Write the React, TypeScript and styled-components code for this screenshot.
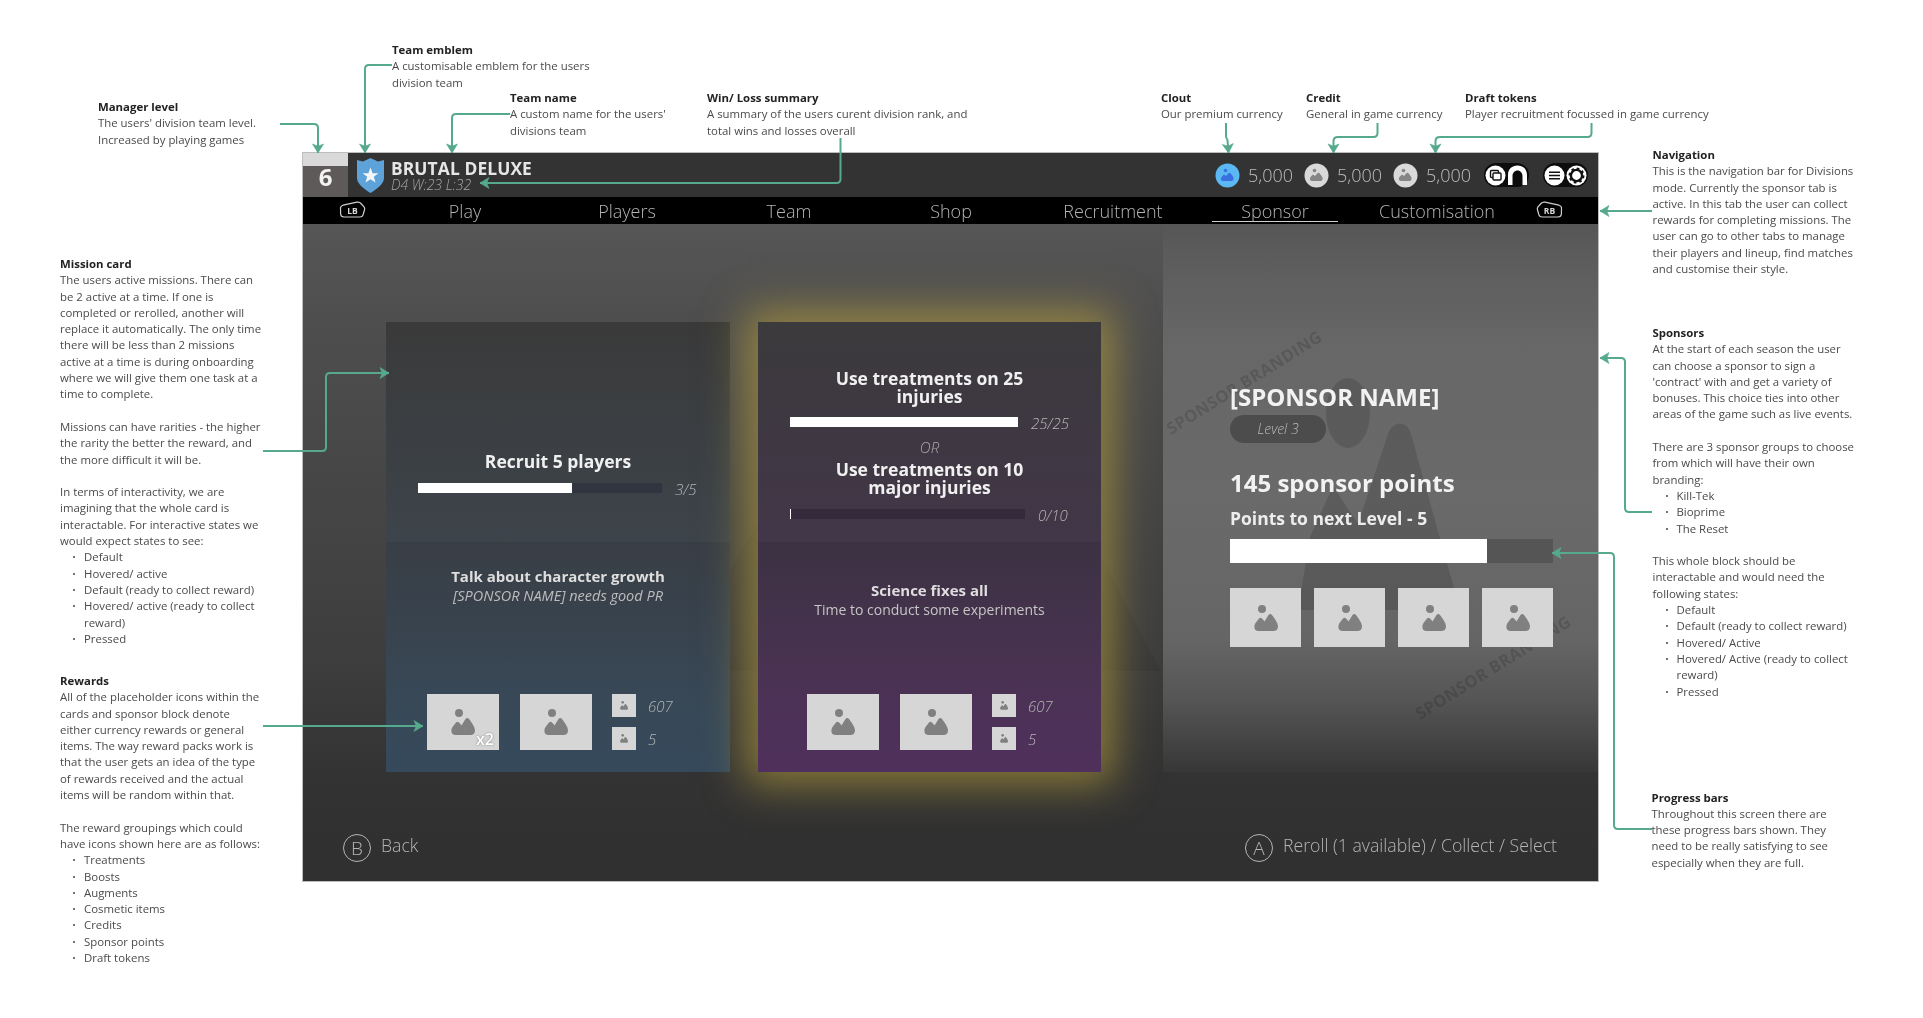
import React from "react";
import styled, { createGlobalStyle, css } from "styled-components";

const Global = createGlobalStyle`
  html, body { margin: 0; padding: 0; background: #fff; }
  body { font-family: "Open Sans", "Noto Sans", sans-serif; overflow: hidden; }
  * { box-sizing: border-box; }
`;

const Board = styled.div`
  position: relative;
  width: 1923px;
  height: 1018px;
  padding: 153px 0 0 303px;
  background: #fff;
  filter: blur(0.35px);
`;

const Note = styled.div<{ $x: number; $y: number }>`
  position: absolute;
  left: ${(p) => p.$x}px;
  top: ${(p) => p.$y}px;
  font-size: 11.4px;
  line-height: 16.3px;
  color: #4a4a4a;
  white-space: nowrap;
`;
const NoteTitle = styled.div`
  font-weight: 700;
  color: #222;
`;
const NoteLine = styled.div`
  min-height: 16.3px;
`;
const NoteBullet = styled.div<{ $bare?: boolean }>`
  position: relative;
  padding-left: 24px;
  ${(p) =>
    !p.$bare &&
    css`
      &::before {
        content: "";
        position: absolute;
        left: 13px;
        top: 7px;
        width: 2px;
        height: 2px;
        border-radius: 50%;
        background: #444;
      }
    `}
`;

const Connectors = styled.svg`
  position: absolute;
  left: 0;
  top: 0;
  z-index: 5;
  pointer-events: none;
`;

const Frame = styled.div`
  width: 1295px;
  height: 728px;
  display: flex;
  flex-direction: column;
  outline: 1px solid #bdbdbd;
  background: #333;
  overflow: hidden;
`;

const Header = styled.header`
  height: 44px;
  display: flex;
  align-items: center;
  background: #333;
  padding-right: 10px;
`;
const LevelBox = styled.div`
  width: 45px;
  height: 44px;
  display: flex;
  flex-direction: column;
`;
const LevelBand = styled.div`
  height: 13px;
  background: #d9d9d9;
`;
const LevelNumber = styled.div`
  flex: 1;
  background: #5f5a5a;
  color: #f2f2f2;
  font-weight: 700;
  font-size: 24px;
  line-height: 21px;
  text-align: center;
`;
const Shield = styled.svg`
  margin-left: 9px;
`;
const TeamText = styled.div`
  margin-left: 7px;
  display: flex;
  flex-direction: column;
`;
const TeamName = styled.div`
  font-size: 17.4px;
  line-height: 19px;
  font-weight: 700;
  color: #e6e6e6;
  letter-spacing: 0.1px;
`;
const TeamRecord = styled.div`
  font-size: 14px;
  line-height: 14px;
  font-style: italic;
  font-weight: 300;
  color: #a6a6a6;
`;
const Wallet = styled.div`
  margin-left: auto;
  display: flex;
  align-items: center;
`;
const Amount = styled.span`
  margin: 0 13px 0 8px;
  width: 43px;
  font-size: 18px;
  font-weight: 300;
  color: #bdbdbd;
  white-space: nowrap;
`;
const Pill = styled.div<{ $gap: number }>`
  height: 24px;
  width: 45px;
  margin-left: ${(p) => p.$gap}px;
  background: #0c0c0c;
  border-radius: 12px;
  display: flex;
  align-items: center;
  justify-content: space-between;
  padding: 0 1px;
`;

const Nav = styled.nav`
  height: 27px;
  background: #000;
  display: grid;
  grid-template-columns: 81px repeat(7, 162px) 80px;
  align-items: stretch;
`;
const Tab = styled.div<{ $active?: boolean }>`
  position: relative;
  display: flex;
  align-items: center;
  justify-content: center;
  font-size: 18px;
  font-weight: 300;
  color: #b4b4b4;
  ${(p) =>
    p.$active &&
    css`
      &::after {
        content: "";
        position: absolute;
        left: 18px;
        right: 18px;
        bottom: 2px;
        height: 1px;
        background: #cfcfcf;
      }
    `}
`;
const Bumper = styled.div<{ $side: "l" | "r" }>`
  display: flex;
  align-items: center;
  justify-content: center;
  padding-bottom: 3px;
  ${(p) => (p.$side === "l" ? "padding-left: 18px;" : "padding-right: 18px;")}
`;

const Main = styled.main`
  position: relative;
  flex: 1;
  display: flex;
  flex-direction: column;
  background: linear-gradient(#565656 0%, #4e4e4e 15%, #3e3e3e 65%, #333 84%, #2f2f2f 100%);
`;
const Ghost = styled.svg`
  position: absolute;
  left: 0;
  top: 0;
`;
const Content = styled.div`
  position: relative;
  height: 548px;
  display: flex;
  padding-left: 83px;
`;
const Card = styled.article<{ $tone: "blue" | "purple" }>`
  width: ${(p) => (p.$tone === "blue" ? 344 : 343)}px;
  height: 450px;
  margin-top: 98px;
  margin-right: 28px;
  display: flex;
  flex-direction: column;
  background: ${(p) =>
    p.$tone === "blue"
      ? "linear-gradient(#3a3a3a 0%, #3d444b 49%, #364a5c 100%)"
      : "linear-gradient(#3b3a3c 0%, #423648 49%, #50305c 100%)"};
  ${(p) => p.$tone === "purple" && "box-shadow: 0 0 38px 12px rgba(190, 165, 60, 0.62);"}
`;
const Upper = styled.div<{ $top: number }>`
  height: 220px;
  padding-top: ${(p) => p.$top}px;
`;
const Lower = styled.div<{ $top: number; $left: number }>`
  height: 230px;
  padding-top: ${(p) => p.$top}px;
  display: flex;
  flex-direction: column;
  background: linear-gradient(rgba(20, 15, 25, 0.11), rgba(20, 15, 25, 0) 70%);
  --reward-left: ${(p) => p.$left}px;
`;
const Objective = styled.h3`
  margin: 0;
  font-size: 17.5px;
  line-height: 17.5px;
  font-weight: 700;
  color: #f0f0f0;
  text-align: center;
`;
const Or = styled.div`
  margin: 11px 0 5px;
  font-size: 15px;
  line-height: 18px;
  font-style: italic;
  font-weight: 300;
  color: #a8a8a8;
  text-align: center;
`;
const BarRow = styled.div<{ $mt: number }>`
  margin-top: ${(p) => p.$mt}px;
  height: 10px;
  padding-left: 32px;
  display: flex;
  align-items: center;
`;
const Track = styled.div<{ $w: number; $bg: string }>`
  width: ${(p) => p.$w}px;
  height: 10px;
  background: ${(p) => p.$bg};
`;
const Fill = styled.div`
  height: 100%;
  background: #fff;
`;
const BarLabel = styled.span`
  position: relative;
  top: 1px;
  margin-left: 13px;
  font-size: 15px;
  font-style: italic;
  font-weight: 300;
  color: #b5b5b5;
`;
const Headline = styled.div`
  font-size: 15px;
  line-height: 20px;
  font-weight: 700;
  color: #dedede;
  text-align: center;
`;
const Subline = styled.div<{ $italic?: boolean }>`
  font-size: ${(p) => (p.$italic ? 14.5 : 14)}px;
  line-height: 20px;
  font-weight: 400;
  font-style: ${(p) => (p.$italic ? "italic" : "normal")};
  color: ${(p) => (p.$italic ? "#bdbdbd" : "#c6c6c6")};
  text-align: center;
`;
const Rewards = styled.div`
  margin-top: auto;
  padding: 0 0 22px var(--reward-left);
  display: flex;
  align-items: flex-end;
  gap: 20.5px;
`;
const RewardBox = styled.div<{ $w?: number; $h?: number }>`
  position: relative;
  width: ${(p) => p.$w ?? 72}px;
  height: ${(p) => p.$h ?? 56}px;
  background: #d6d6d6;
  display: flex;
  align-items: center;
  justify-content: center;
`;
const Multiplier = styled.span`
  position: absolute;
  right: 5px;
  bottom: 3px;
  font-size: 16px;
  line-height: 16px;
  font-weight: 600;
  color: #fff;
  text-shadow: 0 0 2px #777;
`;
const SmallStack = styled.div`
  display: flex;
  flex-direction: column;
  gap: 10px;
`;
const SmallRow = styled.div`
  display: flex;
  align-items: center;
  gap: 12px;
  height: 23px;
`;
const SmallBox = styled.div`
  width: 24px;
  height: 23px;
  background: #d6d6d6;
  display: flex;
  align-items: center;
  justify-content: center;
`;
const SmallValue = styled.span`
  font-size: 15px;
  font-style: italic;
  font-weight: 300;
  color: #b5b5b5;
`;

const SponsorPanel = styled.section`
  position: relative;
  flex: 1;
  margin-left: 34px;
  padding: 158px 0 0 67px;
  overflow: hidden;
  background: linear-gradient(#565656 0%, #5c5c5c 6%, #676767 22%, #6a6a6a 50%, #656565 76%, #555 87%, #404040 96%, #373737 100%);
`;
const Watermark = styled.span<{ $x: number; $y: number }>`
  position: absolute;
  left: ${(p) => p.$x}px;
  top: ${(p) => p.$y}px;
  font-size: 16.5px;
  line-height: 20px;
  font-weight: 700;
  letter-spacing: 0.4px;
  white-space: nowrap;
  color: rgba(0, 0, 0, 0.14);
  transform: rotate(-32deg);
  transform-origin: 0 50%;
`;
const PanelBody = styled.div`
  position: relative;
`;
const SponsorName = styled.h2`
  margin: 0;
  font-size: 24px;
  line-height: 30px;
  font-weight: 700;
  color: #f2f2f2;
`;
const LevelPill = styled.div`
  margin-top: 3px;
  width: 96px;
  height: 28px;
  border-radius: 14px;
  background: #4c4c4c;
  color: #b9b9b9;
  font-size: 14px;
  font-style: italic;
  font-weight: 300;
  line-height: 28px;
  text-align: center;
`;
const SponsorPoints = styled.div`
  margin-top: 24px;
  font-size: 24px;
  line-height: 32px;
  font-weight: 700;
  color: #f2f2f2;
`;
const NextLevel = styled.div`
  margin-top: 7px;
  font-size: 17.5px;
  line-height: 24px;
  font-weight: 700;
  color: #ededed;
`;
const SponsorTrack = styled.div`
  margin-top: 9px;
  width: 323px;
  height: 24px;
  background: #555;
`;
const SponsorBoxes = styled.div`
  margin-top: 25px;
  width: 323px;
  display: flex;
  justify-content: space-between;
`;

const Footer = styled.footer`
  flex: 1;
  display: flex;
  justify-content: space-between;
  align-items: flex-start;
  padding: 62px 41px 0 40px;
`;
const Hint = styled.div`
  display: flex;
  align-items: center;
  gap: 10px;
  font-size: 17.7px;
  font-weight: 300;
  color: #b5b5b5;
  white-space: nowrap;
`;
const HintText = styled.span`
  position: relative;
  top: -3px;
`;
const PadButton = styled.span`
  width: 28px;
  height: 28px;
  border-radius: 50%;
  border: 1.5px solid #b5b5b5;
  display: flex;
  align-items: center;
  justify-content: center;
  font-size: 19px;
  font-weight: 300;
  color: #b5b5b5;
`;

const Placeholder = ({ w = 24, color = "#808080" }: { w?: number; color?: string }) => (
  <svg width={w} height={(w * 26) / 24} viewBox="0 0 24 26" aria-hidden>
    <circle cx="8" cy="4" r="4" fill={color} />
    <path
      d="M4 26C0 26-.5 21 1.5 18L5 13.5C6.5 11.8 8 12.8 9.5 15L10.5 16.5 14.5 10C15.5 8.6 17 8.6 18 10 21 14 24 18 24 21.5 24 24.5 22 26 19.5 26Z"
      fill={color}
    />
  </svg>
);

const Coin = ({ bg, fg }: { bg: string; fg: string }) => (
  <svg width="25" height="25" viewBox="0 0 25 25" aria-hidden>
    <circle cx="12.5" cy="12.5" r="12" fill={bg} />
    <circle cx="10.5" cy="7.5" r="1.8" fill={fg} />
    <path d="M8 18C5.5 18 5.5 15 7 13.5L9 11.5 11 13 13.5 10.2C14.5 9.5 15.5 10 16 11 18 13 19 15 18.5 16.5 18 18 17 18 16 18Z" fill={fg} />
  </svg>
);

const Round = ({ children }: { children?: React.ReactNode }) => (
  <svg width="21" height="21" viewBox="0 0 21 21" aria-hidden>
    <circle cx="10.5" cy="10.5" r="10" fill="#fff" />
    {children}
  </svg>
);

const Bumpers = ({ label, flip }: { label: string; flip?: boolean }) => (
  <svg width="27" height="17" viewBox="0 0 27 17" aria-label={label}>
    <path
      d="M1.5 6.5C2 5 3 4.5 4 4.2L18 1.2C20 .9 21 1.3 22 2.5L25.2 6.2C25.8 7 25.8 8 25.5 9L24 14C23.5 15.5 22.5 16 21 16H5C3 16 1.8 15 1.6 13Z"
      fill="none"
      stroke="#cfcfcf"
      strokeWidth="1.2"
      transform={flip ? "translate(27 0) scale(-1 1)" : undefined}
    />
    <text x="13.5" y="13" textAnchor="middle" fontSize="8.5" fontWeight="700" fill="#d8d8d8" fontFamily="Open Sans, sans-serif">
      {label}
    </text>
  </svg>
);

const notes: { x: number; y: number; title: string; lines: string[] }[] = [
  { x: 392, y: 42, title: "Team emblem", lines: ["A customisable emblem for the users", "division team"] },
  { x: 510, y: 90, title: "Team name", lines: ["A custom name for the users'", "divisions team"] },
  { x: 707, y: 90, title: "Win/ Loss summary", lines: ["A summary of the users curent division rank, and", "total wins and losses overall"] },
  { x: 98, y: 99, title: "Manager level", lines: ["The users' division team level.", "Increased by playing games"] },
  { x: 1161, y: 90, title: "Clout", lines: ["Our premium currency"] },
  { x: 1306, y: 90, title: "Credit", lines: ["General in game currency"] },
  { x: 1465, y: 90, title: "Draft tokens", lines: ["Player recruitment focussed in game currency"] },
  {
    x: 1652.5,
    y: 147,
    title: "Navigation",
    lines: [
      "This is the navigation bar for Divisions",
      "mode. Currently the sponsor tab is",
      "active. In this tab the user can collect",
      "rewards for completing missions. The",
      "user can go to other tabs to manage",
      "their players and lineup, find matches",
      "and customise their style.",
    ],
  },
  {
    x: 1652.5,
    y: 325,
    title: "Sponsors",
    lines: [
      "At the start of each season the user",
      "can choose a sponsor to sign a",
      "'contract' with and get a variety of",
      "bonuses. This choice ties into other",
      "areas of the game such as live events.",
      "",
      "There are 3 sponsor groups to choose",
      "from which will have their own",
      "branding:",
      "* Kill-Tek",
      "* Bioprime",
      "* The Reset",
      "",
      "This whole block should be",
      "interactable and would need the",
      "following states:",
      "* Default",
      "* Default (ready to collect reward)",
      "* Hovered/ Active",
      "* Hovered/ Active (ready to collect",
      "> reward)",
      "* Pressed",
    ],
  },
  {
    x: 1651.5,
    y: 789.5,
    title: "Progress bars",
    lines: [
      "Throughout this screen there are",
      "these progress bars shown. They",
      "need to be really satisfying to see",
      "especially when they are full.",
    ],
  },
  {
    x: 60,
    y: 256,
    title: "Mission card",
    lines: [
      "The users active missions. There can",
      "be 2 active at a time. If one is",
      "completed or rerolled, another will",
      "replace it automatically. The only time",
      "there will be less than 2 missions",
      "active at a time is during onboarding",
      "where we will give them one task at a",
      "time to complete.",
      "",
      "Missions can have rarities - the higher",
      "the rarity the better the reward, and",
      "the more difficult it will be.",
      "",
      "In terms of interactivity, we are",
      "imagining that the whole card is",
      "interactable. For interactive states we",
      "would expect states to see:",
      "* Default",
      "* Hovered/ active",
      "* Default (ready to collect reward)",
      "* Hovered/ active (ready to collect",
      "> reward)",
      "* Pressed",
    ],
  },
  {
    x: 60,
    y: 673,
    title: "Rewards",
    lines: [
      "All of the placeholder icons within the",
      "cards and sponsor block denote",
      "either currency rewards or general",
      "items. The way reward packs work is",
      "that the user gets an idea of the type",
      "of rewards received and the actual",
      "items will be random within that.",
      "",
      "The reward groupings which could",
      "have icons shown here are as follows:",
      "* Treatments",
      "* Boosts",
      "* Augments",
      "* Cosmetic items",
      "* Credits",
      "* Sponsor points",
      "* Draft tokens",
    ],
  },
];

const arrows: string[] = [
  "M280 124H314Q318 124 318 128V153",
  "M392 65H369Q365 65 365 69V153",
  "M510 114H456Q452 114 452 118V153",
  "M840.5 138V179Q840.5 183 836.5 183H480",
  "M1226 123V136Q1226 138 1227.5 140L1228.5 153",
  "M1377.5 123V133Q1377.5 137 1373.5 137H1338Q1333.5 137 1333.5 141V153",
  "M1591.5 123V133Q1591.5 137 1587.5 137H1440Q1435.5 137 1435.5 141V153",
  "M1652 211H1600",
  "M1652 512H1629Q1625 512 1625 508V362Q1625 358 1621 358H1600",
  "M1652 829H1618Q1614 829 1614 825V557Q1614 553 1610 553H1552",
  "M263 451H322Q326 451 326 447V377Q326 373 330 373H389",
  "M263 726H423",
];

const tabs = ["Play", "Players", "Team", "Shop", "Recruitment", "Sponsor", "Customisation"];

const SmallRewards = () => (
  <SmallStack>
    <SmallRow>
      <SmallBox><Placeholder w={8} /></SmallBox>
      <SmallValue>607</SmallValue>
    </SmallRow>
    <SmallRow>
      <SmallBox><Placeholder w={8} /></SmallBox>
      <SmallValue>5</SmallValue>
    </SmallRow>
  </SmallStack>
);

export default function App() {
  return (
    <Board>
      <Global />
      {notes.map((n) => (
        <Note key={n.title} $x={n.x} $y={n.y}>
          <NoteTitle>{n.title}</NoteTitle>
          {n.lines.map((l, i) =>
            l.startsWith("* ") ? (
              <NoteBullet key={i}>{l.slice(2)}</NoteBullet>
            ) : l.startsWith("> ") ? (
              <NoteBullet key={i} $bare>{l.slice(2)}</NoteBullet>
            ) : (
              <NoteLine key={i}>{l}</NoteLine>
            )
          )}
        </Note>
      ))}

      <Frame>
        <Header>
          <LevelBox>
            <LevelBand />
            <LevelNumber>6</LevelNumber>
          </LevelBox>
          <Shield width="27" height="35" viewBox="0 0 27 35" aria-hidden>
            <path d="M0 2 6 3.5 13.5 0 21 3.5 27 2V20C27 26 20 31 13.5 35 7 31 0 26 0 20Z" fill="#5da3d9" />
            <path d="M13.5 9.5 15.6 15.2H21.4L16.8 18.8 18.5 24.6 13.5 21.2 8.5 24.6 10.2 18.8 5.6 15.2H11.4Z" fill="#f4f6f8" />
          </Shield>
          <TeamText>
            <TeamName>BRUTAL DELUXE</TeamName>
            <TeamRecord>D4 W:23 L:32</TeamRecord>
          </TeamText>
          <Wallet>
            <Coin bg="#5bb8f2" fg="#3a6fe0" />
            <Amount>5,000</Amount>
            <Coin bg="#d9d9d9" fg="#858585" />
            <Amount>5,000</Amount>
            <Coin bg="#d9d9d9" fg="#858585" />
            <Amount>5,000</Amount>
            <Pill $gap={2}>
              <Round>
                <rect x="5.5" y="5.5" width="8" height="7" rx="1" fill="none" stroke="#111" strokeWidth="1.4" />
                <rect x="8" y="8" width="8" height="7" rx="1" fill="#fff" stroke="#111" strokeWidth="1.4" />
              </Round>
              <svg width="21" height="21" viewBox="0 0 21 21" aria-hidden>
                <path d="M1 20V10C1 4 5 .5 10.5.5S20 4 20 10V20H15.5V11C15.5 8 13.5 5.5 10.5 5.5S5.5 8 5.5 11V20Z" fill="#fff" />
              </svg>
            </Pill>
            <Pill $gap={14}>
              <Round>
                <path d="M5 7.2H16M5 10.5H16M5 13.8H16" stroke="#111" strokeWidth="1.6" />
              </Round>
              <Round>
                <circle cx="10.5" cy="10.5" r="5.6" fill="none" stroke="#111" strokeWidth="2.4" />
                <circle cx="10.5" cy="10.5" r="7" fill="none" stroke="#111" strokeWidth="2" strokeDasharray="2.6 2.9" />
              </Round>
            </Pill>
          </Wallet>
        </Header>

        <Nav>
          <Bumper $side="l"><Bumpers label="LB" /></Bumper>
          {tabs.map((t) => (
            <Tab key={t} $active={t === "Sponsor"}>{t}</Tab>
          ))}
          <Bumper $side="r"><Bumpers label="RB" flip /></Bumper>
        </Nav>

        <Main>
          <Ghost width="1295" height="657" viewBox="0 0 1295 657" aria-hidden>
            <path d="M368 447 569 105H678L858 447Z" fill="#000" fillOpacity="0.05" />
          </Ghost>
          <Content>
            <Card $tone="blue">
              <Upper $top={131}>
                <Objective>Recruit 5 players</Objective>
                <BarRow $mt={12}>
                  <Track $w={244} $bg="#2f3640">
                    <Fill style={{ width: "63%" }} />
                  </Track>
                  <BarLabel>3/5</BarLabel>
                </BarRow>
              </Upper>
              <Lower $top={24} $left={41}>
                <Headline>Talk about character growth</Headline>
                <Subline $italic>[SPONSOR NAME] needs good PR</Subline>
                <Rewards>
                  <RewardBox>
                    <Placeholder />
                    <Multiplier>x2</Multiplier>
                  </RewardBox>
                  <RewardBox><Placeholder /></RewardBox>
                  <SmallRewards />
                </Rewards>
              </Lower>
            </Card>

            <Card $tone="purple">
              <Upper $top={48}>
                <Objective>Use treatments on 25<br />injuries</Objective>
                <BarRow $mt={12}>
                  <Track $w={228} $bg="#352a3c">
                    <Fill style={{ width: "100%" }} />
                  </Track>
                  <BarLabel>25/25</BarLabel>
                </BarRow>
                <Or>OR</Or>
                <Objective>Use treatments on 10<br />major injuries</Objective>
                <BarRow $mt={13}>
                  <Track $w={235} $bg="#352a3c">
                    <Fill style={{ width: "1px" }} />
                  </Track>
                  <BarLabel>0/10</BarLabel>
                </BarRow>
              </Upper>
              <Lower $top={38} $left={49}>
                <Headline>Science fixes all</Headline>
                <Subline>Time to conduct some experiments</Subline>
                <Rewards>
                  <RewardBox><Placeholder /></RewardBox>
                  <RewardBox><Placeholder /></RewardBox>
                  <SmallRewards />
                </Rewards>
              </Lower>
            </Card>

            <SponsorPanel>
              <Ghost width="435" height="548" viewBox="0 0 435 548" aria-hidden>
                <ellipse cx="185" cy="189" rx="22" ry="35" fill="#000" fillOpacity="0.13" />
                <path d="M135 386 147 313 170 262 195 300 225 210C230 196 244 196 248 210L297 386Z" fill="#000" fillOpacity="0.13" />
              </Ghost>
              <Watermark $x={5} $y={196}>SPONSOR BRANDING</Watermark>
              <Watermark $x={254} $y={481}>SPONSOR BRANDING</Watermark>
              <PanelBody>
                <SponsorName>[SPONSOR NAME]</SponsorName>
                <LevelPill>Level 3</LevelPill>
                <SponsorPoints>145 sponsor points</SponsorPoints>
                <NextLevel>Points to next Level - 5</NextLevel>
                <SponsorTrack>
                  <Fill style={{ width: "79.5%" }} />
                </SponsorTrack>
                <SponsorBoxes>
                  {[0, 1, 2, 3].map((i) => (
                    <RewardBox key={i} $w={71} $h={59}><Placeholder /></RewardBox>
                  ))}
                </SponsorBoxes>
              </PanelBody>
            </SponsorPanel>
          </Content>

          <Footer>
            <Hint>
              <PadButton>B</PadButton>
              <HintText>Back</HintText>
            </Hint>
            <Hint>
              <PadButton>A</PadButton>
              <HintText>Reroll (1 available) / Collect / Select</HintText>
            </Hint>
          </Footer>
        </Main>
      </Frame>

      <Connectors width="1923" height="1018" viewBox="0 0 1923 1018" aria-hidden>
        <defs>
          <marker id="tip" markerUnits="userSpaceOnUse" markerWidth="12" markerHeight="14" viewBox="-1 -7 12 14" refX="9" refY="0" orient="auto">
            <path d="M0-5.5 9 0 0 5.5 2.2 0Z" fill="#55a98d" stroke="#55a98d" strokeWidth="0.6" strokeLinejoin="round" />
          </marker>
        </defs>
        {arrows.map((d) => (
          <path key={d} d={d} fill="none" stroke="#55a98d" strokeWidth="2" markerEnd="url(#tip)" />
        ))}
      </Connectors>
    </Board>
  );
}
